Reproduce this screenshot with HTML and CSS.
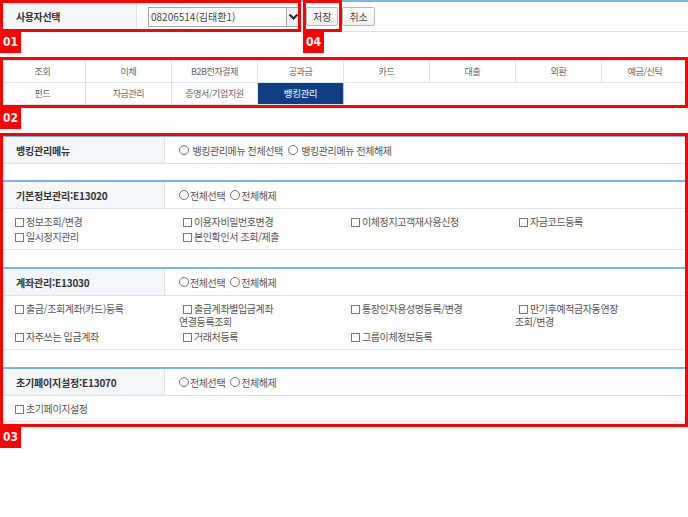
FILE: index.html
```html
<!DOCTYPE html>
<html lang="ko">
<head>
<meta charset="utf-8">
<title>뱅킹관리</title>
<link rel="stylesheet" href="styles.css">
</head>
<body>
<div class="page">
  <div class="userbar">
    <div class="ub-label">사용자선택</div>
    <div class="ub-value">
      <div class="select">
        <span class="select-text">08206514(김태환1)</span>
        <span class="select-btn"><svg width="11" height="8" viewBox="0 0 11 8"><polyline points="1.5,1.5 5.5,5.5 9.5,1.5" fill="none" stroke="#222" stroke-width="2"/></svg></span>
      </div>
      <button class="btn">저장</button>
      <button class="btn">취소</button>
    </div>
  </div>

  <div class="tabs">
    <div class="tab">조회</div>
    <div class="tab">이체</div>
    <div class="tab">B2B전자결제</div>
    <div class="tab">공과금</div>
    <div class="tab">카드</div>
    <div class="tab">대출</div>
    <div class="tab">외환</div>
    <div class="tab">예금/신탁</div>
    <div class="tab">펀드</div>
    <div class="tab">자금관리</div>
    <div class="tab">증명서/기업지원</div>
    <div class="tab active">뱅킹관리</div>
  </div>

  <div class="sections">
    <section class="sec sec-menu">
      <div class="sec-head">
        <div class="sec-label">뱅킹관리메뉴</div>
        <div class="sec-opts">
          <span class="radio"><span class="rd"></span>&nbsp;뱅킹관리메뉴 전체선택</span>
          <span class="radio"><span class="rd"></span>&nbsp;뱅킹관리메뉴 전체해제</span>
        </div>
      </div>
    </section>

    <section class="sec">
      <div class="sec-head">
        <div class="sec-label">기본정보관리:E13020</div>
        <div class="sec-opts">
          <span class="radio"><span class="rd"></span>전체선택</span>
          <span class="radio"><span class="rd"></span>전체해제</span>
        </div>
      </div>
      <div class="items">
        <span class="item"><span class="cb"></span>정보조회/변경</span>
        <span class="item"><span class="cb"></span>이용자비밀번호변경</span>
        <span class="item"><span class="cb"></span>이체정지고객재사용신청</span>
        <span class="item"><span class="cb"></span>자금코드등록</span>
        <span class="item"><span class="cb"></span>일시정지관리</span>
        <span class="item"><span class="cb"></span>본인확인서 조회/제출</span>
      </div>
    </section>

    <section class="sec">
      <div class="sec-head">
        <div class="sec-label">계좌관리:E13030</div>
        <div class="sec-opts">
          <span class="radio"><span class="rd"></span>전체선택</span>
          <span class="radio"><span class="rd"></span>전체해제</span>
        </div>
      </div>
      <div class="items">
        <span class="item"><span class="cb"></span>출금/조회계좌(카드)등록</span>
        <span class="item"><span class="cb"></span>출금계좌별입금계좌<br>연결등록조회</span>
        <span class="item"><span class="cb"></span>통장인자용성명등록/변경</span>
        <span class="item"><span class="cb"></span>만기후예적금자동연장<br>조회/변경</span>
        <span class="item"><span class="cb"></span>자주쓰는 입금계좌</span>
        <span class="item"><span class="cb"></span>거래처등록</span>
        <span class="item"><span class="cb"></span>그룹이체정보등록</span>
      </div>
    </section>

    <section class="sec">
      <div class="sec-head">
        <div class="sec-label">초기페이지설정:E13070</div>
        <div class="sec-opts">
          <span class="radio"><span class="rd"></span>전체선택</span>
          <span class="radio"><span class="rd"></span>전체해제</span>
        </div>
      </div>
      <div class="items">
        <span class="item"><span class="cb"></span>초기페이지설정</span>
      </div>
    </section>
  </div>

  <div class="mark mark-01"></div>
  <div class="badge badge-01">01</div>
  <div class="mark mark-04"></div>
  <div class="badge badge-04">04</div>
  <div class="mark mark-02"></div>
  <div class="badge badge-02">02</div>
  <div class="mark mark-03"></div>
  <div class="badge badge-03">03</div>
</div>
</body>
</html>
```

FILE: styles.css
```css
html, body {
  margin: 0;
  padding: 0;
  background: #fff;
}
body {
  font-family: "Noto Sans CJK KR", "Noto Sans", sans-serif;
  font-size: 10px;
  color: #555;
  letter-spacing: -0.4px;
}
.page {
  position: relative;
  width: 688px;
  padding-bottom: 60px;
}

/* user bar */
.userbar {
  display: flex;
  height: 29px;
  border-top: 2px solid #7ab6e4;
  border-bottom: 1px solid #d9e0e8;
}
.ub-label {
  width: 137px;
  box-sizing: border-box;
  padding-left: 16px;
  background: #f4f7fa;
  border-right: 1px solid #e2e7ee;
  font-weight: bold;
  color: #333;
  display: flex;
  align-items: center;
}
.ub-value {
  display: flex;
  align-items: center;
  padding-left: 11px;
}
.select {
  width: 152px;
  height: 20px;
  box-sizing: border-box;
  border: 1px solid #a8a8a8;
  display: flex;
  align-items: center;
}
.select-text {
  padding-left: 2px;
  color: #444;
  letter-spacing: 0;
}
.select-btn {
  margin-left: auto;
  width: 13px;
  height: 18px;
  box-sizing: border-box;
  border-left: 1px solid #a8a8a8;
  background: #f2f2f2;
  display: flex;
  align-items: center;
  justify-content: center;
}
.btn {
  height: 19px;
  padding: 0 6px;
  margin: 0 0 0 4px;
  border: 1px solid #b8b8b8;
  border-radius: 2px;
  background: linear-gradient(#ffffff, #f0f0f0);
  font-family: inherit;
  font-size: 10px;
  color: #444;
  letter-spacing: 0;
  line-height: 17px;
}
.btn:first-of-type {
  margin-left: 6px;
}

/* tabs */
.tabs {
  margin-top: 28px;
  display: grid;
  grid-template-columns: repeat(8, 86px);
  border-top: 1px solid #dfe5ec;
}
.tab {
  height: 21px;
  line-height: 21px;
  text-align: center;
  font-size: 9px;
  color: #666;
  border-right: 1px solid #dfe5ec;
  border-bottom: 1px solid #dfe5ec;
}
.tab:nth-child(8) {
  border-right: none;
}
.tab.active {
  background: #0f3e84;
  color: #fff;
  font-size: 9.5px;
  border-right-color: #a9c9ea;
}

/* sections */
.sections {
  margin-top: 30px;
}
.sec {
  border-top: 2px solid #7ab6e4;
  margin-bottom: 17px;
}
.sec-menu {
  margin-bottom: 16px;
}
.sec-head {
  display: flex;
  height: 26px;
  border-bottom: 1px solid #dde4ec;
}
.sec-label {
  width: 165px;
  box-sizing: border-box;
  padding-left: 16px;
  background: #f4f7fa;
  border-right: 1px solid #dde4ec;
  font-weight: bold;
  color: #333;
  letter-spacing: -0.2px;
  display: flex;
  align-items: center;
}
.sec-opts {
  display: flex;
  align-items: center;
  gap: 5px;
  padding-left: 14px;
}
.radio {
  display: inline-flex;
  align-items: center;
}
.rd {
  width: 8px;
  height: 8px;
  border: 1px solid #777;
  border-radius: 50%;
  margin-right: 1px;
  background: #fff;
}
.items {
  display: grid;
  grid-template-columns: repeat(4, 168px);
  row-gap: 2px;
  padding: 6px 0 6px 11px;
  border-bottom: 1px solid #dde4ec;
  line-height: 13px;
}
.item {
  display: block;
}
.cb {
  display: inline-block;
  width: 7px;
  height: 7px;
  border: 1px solid #777;
  margin: 0 2px 0 4px;
  vertical-align: -1px;
  background: #fff;
}

/* annotation overlays */
.mark {
  position: absolute;
  box-sizing: border-box;
  border: 3px solid #ff0000;
}
.mark-01 { left: 0; top: 0; width: 301px; height: 32px; }
.mark-04 { left: 303px; top: 0; width: 39px; height: 32px; }
.mark-02 { left: 0; top: 57px; width: 688px; height: 51px; }
.mark-03 { left: 0; top: 133px; width: 688px; height: 294px; }
.badge {
  position: absolute;
  width: 21px;
  height: 21px;
  background: #ff0000;
  color: #fff;
  font-family: "DejaVu Sans Condensed", "DejaVu Sans", sans-serif;
  font-stretch: condensed;
  font-weight: bold;
  font-size: 12px;
  letter-spacing: 0;
  line-height: 21px;
  text-align: center;
}
.badge-01 { left: 0; top: 32px; }
.badge-04 { left: 303px; top: 32px; }
.badge-02 { left: 0; top: 108px; }
.badge-03 { left: 0; top: 427px; }
```
